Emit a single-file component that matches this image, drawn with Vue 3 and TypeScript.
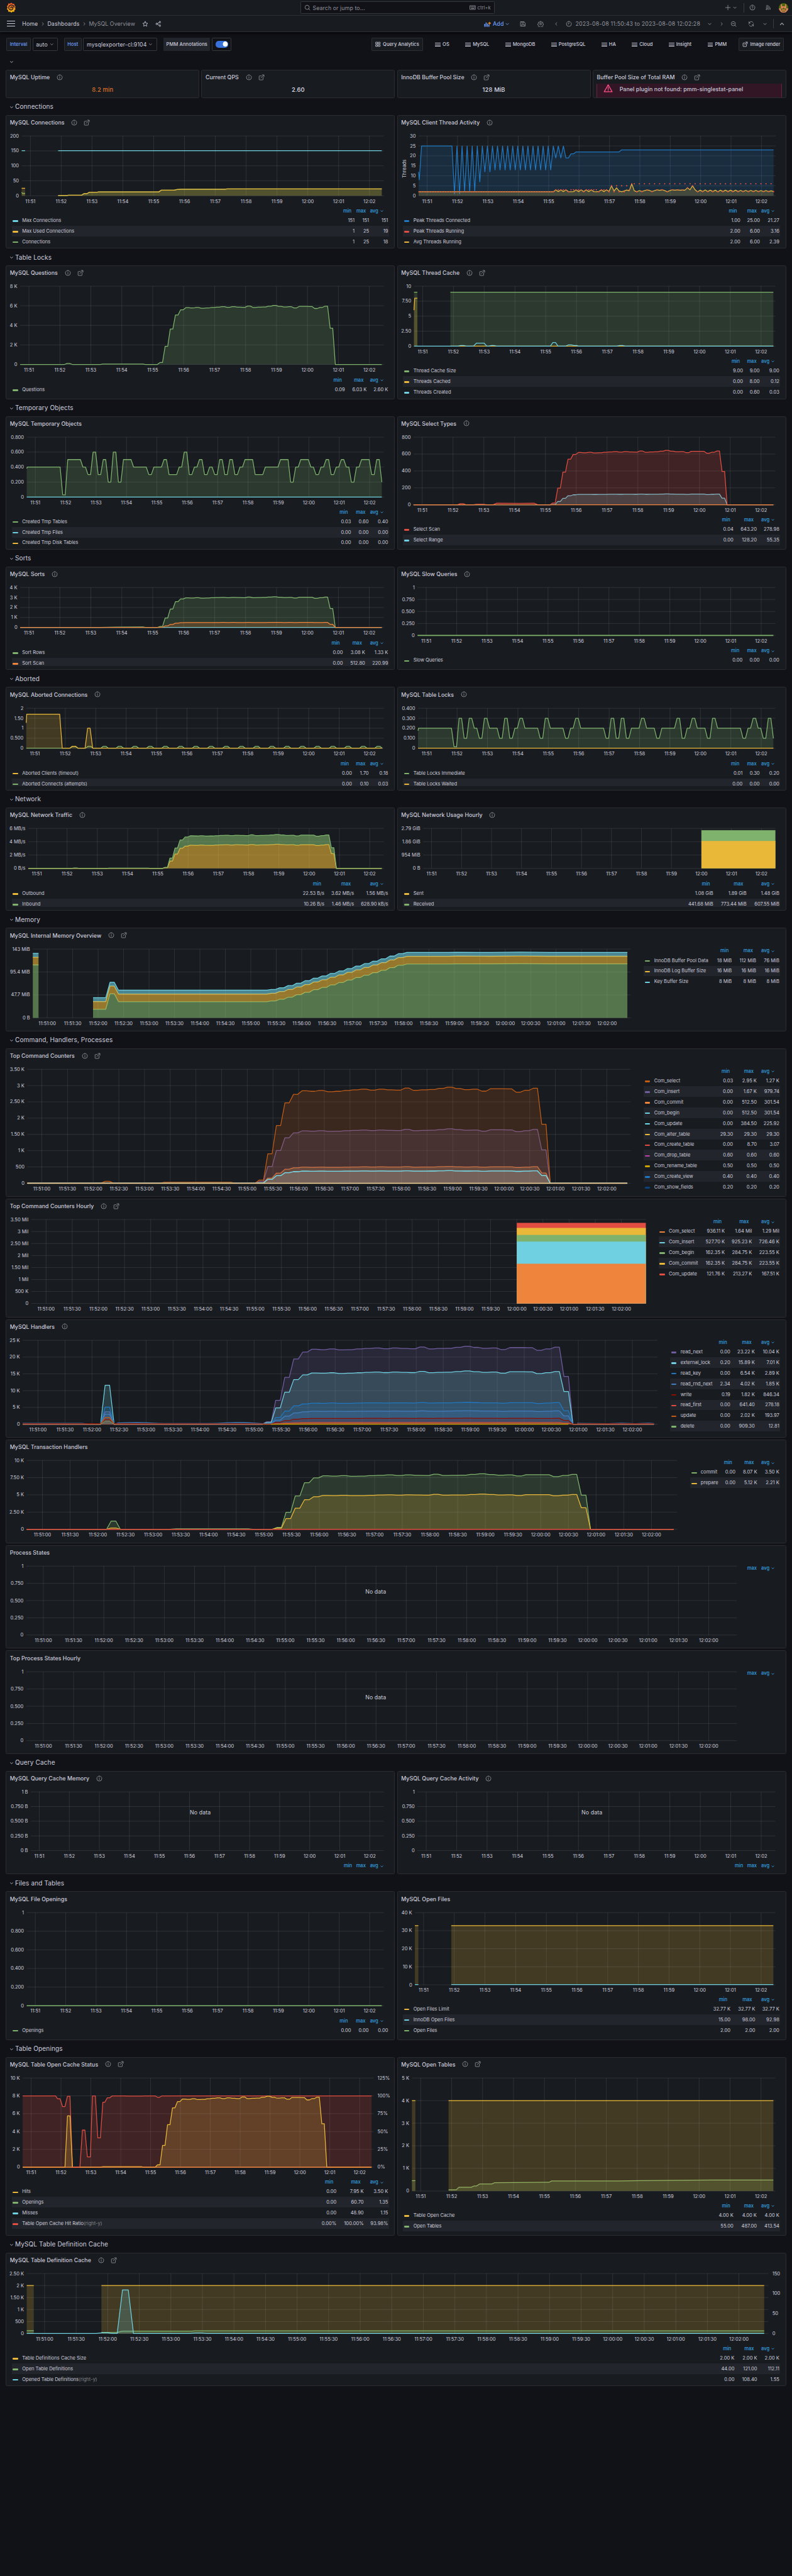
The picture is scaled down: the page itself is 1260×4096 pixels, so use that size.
<script setup lang="ts">
type Pt = [number, number]

interface Series {
  c: string
  segs: Pt[][]
  fill?: number
  w?: number
  base?: Pt[][]
  dots?: boolean
  right?: boolean
}

interface LegendRow {
  c: string
  name: string
  note?: string
  v: string[]
}

interface Panel {
  title: string
  info?: boolean
  link?: boolean
  h: number
  wide?: boolean
  box: [number, number, number, number]
  labels: string[]
  max: number
  series: Series[]
  legend: LegendRow[]
  cols: number[]
  top?: number
  side?: number
  heads?: string[]
  rightLabels?: string[]
  rightMax?: number
  noData?: [number, number]
  yTitle?: string
}

interface Section {
  title: string
  rows: Panel[][]
}

const SPAN = 705
const END = 701

const green = '#7EB26D'
const yellow = '#EAB839'
const cyan = '#6ED0E0'
const orange = '#EF843C'
const red = '#E24D42'
const blue = '#1F78C1'
const purple = '#705DA0'
const rust = '#C15C17'

// Shape of the benchmark run, sampled every ten seconds and shared by most counters.
const load = [
  0.2, 1.85, 3.62, 5.05, 5.58, 5.8, 5.77, 5.82, 5.75, 5.77, 5.82, 5.86, 5.9, 5.84, 5.9, 5.86, 5.84,
  5.97, 5.83, 5.86, 5.88, 5.95, 6.03, 5.94, 5.87, 5.9, 5.78, 5.93, 5.93, 5.92, 5.72, 5.83, 5.96, 3.7, 0,
]

function hold(t0: number, values: number[]): Pt[] {
  return values.flatMap((v, i): Pt[] => [[t0 + i * 10, v], [t0 + i * 10 + 5, v]])
}

function bump(a: number, b: number, v: number, z = 0): Pt[] {
  return [[a - 5, z], [a, v], [b, v], [b + 5, z]]
}

function run(max: number, early: Pt[] = []): Pt[][] {
  return [[[0, 0], ...early, [266, 0], ...hold(271, load.map((v) => (v / 6.03) * max)), [END, 0]]]
}

function flat(v: number, split = true): Pt[][] {
  return split ? [[[0, v], [6.7, v]], [[71, v], [END, v]]] : [[[0, v], [END, v]]]
}

function add(segs: Pt[][], d: number): Pt[][] {
  return segs.map((s) => s.map(([t, v]): Pt => [t, v + d]))
}

function noise(base: number, amp: number, seed: number): Pt[] {
  const out: Pt[] = []
  for (let t = 106; t < 262; t += 10) out.push([t, base + amp * Math.max(0, Math.sin(t * 0.055 + seed))])
  return out
}

const tiny = bump(91, 96, 0.1)
const early: Pt[] = [...tiny, [155, 0], [160, 0.05], [238, 0.05], [243, 0]]
const scaled = (k: number): Pt[] => early.map(([t, v]): Pt => [t, v * k])

const threads: Pt[] = [[0, 12], [1.5, 8], [6, 25], [66, 25]]
const dips = [1, 1, 2, 2, 2, 7, 12, 12, 13, 13, 13, 13, 13, 13, 13, 13, 13, 13, 13, 13, 19, 19]
dips.forEach((v, i) => threads.push([71 + i * 10, v], [76 + i * 10, 25]))
threads.push([291, 19], [296, 19], [301, 21], [306, 21], [311, 22], [396, 22], [401, 23], [END, 23])

const avgVals = [
  2, 2.9, 2.1, 2.9, 2.1, 2.9, 2.1, 2, 2.1, 2.9, 2.1, 2.9, 2.1, 2.9, 2.1, 2.9, 2.1, 2, 2.2, 2.9, 2.1, 2.9, 2.2,
  5, 2.4, 4, 2.4, 2, 2.4, 2.9, 2.5, 6, 2.5, 2, 2.6, 2.1, 2.6, 2.9, 2.7, 2.1, 2.6, 3, 2.7, 3, 2.6, 2, 2.6, 3,
  2.8, 3, 2.8, 2.9, 2.8, 4, 3, 5, 3, 2, 2.8, 2.1, 2.9, 2.1, 2.8, 2.1, 2.8, 2, 2.8, 2.1, 2.8, 2.1, 2.8, 2.1,
  2.8, 2.1, 2.7, 2.1, 2.7, 2.1, 2.7, 2.1, 2.7, 2.1, 2.6, 2.1, 2.6, 2.1, 2.5, 2.1,
]
const avgRun: Pt[] = [[0, 2], ...avgVals.map((v, i): Pt => [266 + i * 5, v])]
const peaks: Pt[] = []
for (let t = 1; t < 267; t += 5) peaks.push([t, 2])
avgVals.forEach((v, i) => {
  const t = 266 + i * 5
  if (t < 375) peaks.push([t, v > 2.5 || i % 3 ? 3 : 2])
  else if (t < 420) peaks.push([t, i % 2 ? 5 : Math.round(v)])
  else peaks.push([t, i % 2 ? v : 6])
})

const tmpTables: Pt[] = [
  [0, 0.38], [1, 0.4], [66, 0.4],
  ...hold(71, [
    0.03, 0.5, 0.5, 0.5, 0.4, 0.3, 0.6, 0.3, 0.5, 0.2, 0.6, 0.2, 0.5, 0.5, 0.4, 0.4, 0.4, 0.3, 0.4, 0.4, 0.5,
    0.3, 0.3, 0.4, 0.6, 0.3, 0.4, 0.5, 0.3, 0.4, 0.3, 0.5, 0.3, 0.5, 0.3, 0.4, 0.5, 0.5, 0.3, 0.3, 0.4, 0.4,
    0.4, 0.5, 0.5, 0.2, 0.4, 0.5, 0.5, 0.4, 0.3, 0.4, 0.5, 0.3, 0.4, 0.5, 0.4, 0.2, 0.4, 0.5, 0.5, 0.3, 0.5,
  ]),
  [END, 0.2],
]

const lockVals: Pt[] = [
  [0, 0.175], [1, 0.2], [66, 0.2],
  ...hold(71, [
    0.015, 0.3, 0.1, 0.3, 0.2, 0.1, 0.3, 0.2, 0.2, 0.1, 0.3, 0.1, 0.2, 0.3, 0.2, 0.2, 0.2, 0.1, 0.3, 0.2, 0.2,
    0.2, 0.1, 0.2, 0.3, 0.2, 0.2, 0.2, 0.2, 0.2, 0.1, 0.3, 0.1, 0.3, 0.1, 0.2, 0.2, 0.3, 0.2, 0.2, 0.1, 0.2,
    0.2, 0.2, 0.3, 0.1, 0.2, 0.3, 0.2, 0.2, 0.1, 0.3, 0.2, 0.2, 0.2, 0.2, 0.2, 0.1, 0.2, 0.3, 0.2, 0.1, 0.3,
  ]),
  [END, 0.1],
]

const abortedBumps: Pt[] = []
for (let t = 91; t < 695; t += 30) abortedBumps.push(...bump(t + (t > 91 ? 1 : 0), t + 6, 0.1))

const used: Pt[][] = [
  [[0, 25], [6.7, 25]],
  [[71, 1], [88, 1], [91, 2], [117, 2], [121, 7], [127, 7], [132, 12], [147, 12], [150, 13], [267, 13], [272, 19],
    [297, 19], [302, 21], [310, 22], [395, 22], [400, 23], [END, 23]],
]
const current: Pt[][] = [[[0, 12], [1.5, 8], [6.7, 8]], used[1]]

const pool: Pt[][] = [
  [[0, 110], [6.7, 110]],
  [
    [71, 17.8], [86, 17.8], [91, 50], [96, 50], [101, 33.5], [276, 33.5],
    ...hold(281, [35, 38.5, 43, 48, 53, 58.5, 63, 68.3, 73.4, 78.5, 83.6, 88.7, 93.8, 98.7, 104.3, 109.3, 111.9]),
    [490, 111.9], [500, 112.3], [540, 112], [575, 112.6], [610, 112], [END, 112],
  ],
]

function spike(v: number): Pt[] {
  return bump(91.5, 96.5, v)
}

const ratio: Pt[] = [
  [0, 100], [66, 100], [70, 96], [75, 96], [80, 85], [85, 85], [90, 99.5], [95, 99.5], [100, 0], [115, 0], [120, 52],
  [125, 52], [130, 14.5], [136, 14.5], [140, 100], [146, 100], [151, 41], [156, 41], [161, 91], [165, 91], [170, 97.3],
  [175, 97.3], [180, 100], [206, 100], [210, 99.6], [240, 99.6], [243, 100], [266, 100], [271, 98], [275, 98],
  [280, 100], [END, 100],
]

const openTables: Pt[][] = [
  [[0, 0.46], [6.7, 0.46]],
  [[71, 0.055], [86, 0.055], [91, 0.165], [115, 0.165], [120, 0.22], [125, 0.22], [131, 0.31], [155, 0.31],
    [160, 0.365], [266, 0.385], [271, 0.445], [400, 0.447], [500, 0.47], [580, 0.487], [END, 0.487]],
]

function bar(v: number): Pt[][] {
  return [[[557, v], [SPAN, v]]]
}

function k(n: number[], unit = ' K'): string[] {
  return n.map((v) => (v === 0 ? '0' : Number.isInteger(v) ? v + unit : v.toFixed(2) + unit))
}

const sections: Section[] = [
  {
    title: 'Connections',
    rows: [[
      {
        title: 'MySQL Connections', info: true, link: true, h: 334, box: [38.8, 953.4, 51.3, 202.3],
        labels: ['200', '150', '100', '50', '0'], max: 200, top: 251, cols: [100.6, 64],
        series: [
          { c: green, segs: current, fill: 0.2 },
          { c: yellow, segs: used, fill: 0.2 },
          { c: cyan, segs: flat(150.5) },
        ],
        legend: [
          { c: cyan, name: 'Max Connections', v: ['151', '151', '151'] },
          { c: yellow, name: 'Max Used Connections', v: ['1', '25', '19'] },
          { c: green, name: 'Connections', v: ['1', '25', '18'] },
        ],
      },
      {
        title: 'MySQL Client Thread Activity', info: true, h: 334, box: [52.1, 953.9, 51.3, 202.3], yTitle: 'Threads',
        labels: ['30', '25', '20', '15', '10', '5', '0'], max: 30, top: 251, cols: [114.7, 65],
        series: [
          { c: blue, segs: [threads], fill: 0.2 },
          { c: yellow, segs: [avgRun], fill: 0.2 },
          { c: red, segs: [peaks], dots: true },
        ],
        legend: [
          { c: blue, name: 'Peak Threads Connected', v: ['1.00', '25.00', '21.27'] },
          { c: red, name: 'Peak Threads Running', v: ['2.00', '6.00', '3.16'] },
          { c: yellow, name: 'Avg Threads Running', v: ['2.00', '6.00', '2.39'] },
        ],
      },
    ]],
  },
  {
    title: 'Table Locks',
    rows: [[
      {
        title: 'MySQL Questions', info: true, link: true, h: 334, box: [35, 953.4, 51.1, 248.7],
        labels: k([8, 6, 4, 2, 0]), max: 8, top: 298, cols: [125, 70],
        series: [{ c: green, segs: run(6.03, early), fill: 0.2 }],
        legend: [{ c: green, name: 'Questions', v: ['0.09', '6.03 K', '2.60 K'] }],
      },
      {
        title: 'MySQL Thread Cache', info: true, link: true, h: 334, box: [40.6, 953.4, 51.1, 202.4],
        labels: ['10', '7.50', '5', '2.50', '0'], max: 10, top: 251, cols: [107.7, 65.6],
        series: [
          { c: green, segs: flat(9), fill: 0.2 },
          { c: yellow, segs: [[[0, 6], [1.5, 8], [6.7, 8]], [[71, 0], [END, 0]]], fill: 0.2 },
          {
            c: cyan,
            segs: [[[0, 0], ...bump(91, 97, 0.1), [116, 0], [122, 0.5], [137, 0.5], [142, 0], ...bump(151, 156, 0.1),
              ...bump(271, 276, 0.6), [296, 0], [301, 0.2], [307, 0.2], [312, 0.1], [318, 0.1], [320, 0],
              ...bump(401, 407, 0.1), [END, 0]]],
          },
        ],
        legend: [
          { c: green, name: 'Thread Cache Size', v: ['9.00', '9.00', '9.00'] },
          { c: yellow, name: 'Threads Cached', v: ['0.00', '8.00', '0.12'] },
          { c: cyan, name: 'Threads Created', v: ['0.00', '0.60', '0.03'] },
        ],
      },
    ]],
  },
  {
    title: 'Temporary Objects',
    rows: [[
      {
        title: 'MySQL Temporary Objects', h: 334, box: [51.6, 953.4, 51.1, 202.4],
        labels: ['0.800', '0.600', '0.400', '0.200', '0'], max: 0.8, top: 251, cols: [109.5, 65],
        series: [
          { c: green, segs: [tmpTables], fill: 0.2 },
          { c: cyan, segs: flat(0, false) },
        ],
        legend: [
          { c: green, name: 'Created Tmp Tables', v: ['0.03', '0.60', '0.40'] },
          { c: cyan, name: 'Created Tmp Files', v: ['0.00', '0.00', '0.00'] },
          { c: yellow, name: 'Created Tmp Disk Tables', v: ['0.00', '0.00', '0.00'] },
        ],
      },
      {
        title: 'MySQL Select Types', info: true, h: 334, box: [39.4, 953.4, 51.1, 222],
        labels: ['800', '600', '400', '200', '0'], max: 800, top: 271, cols: [132, 73],
        series: [
          { c: cyan, segs: run(128.2), fill: 0.2 },
          {
            c: red,
            segs: run(643.2, [...bump(91, 97, 13), [117, 0], [122, 6], [137, 6], [142, 0], [155, 0], [162, 19],
              [205, 17], [235, 19], [242, 0]]),
            fill: 0.2,
          },
          { c: orange, segs: flat(0, false) },
        ],
        legend: [
          { c: red, name: 'Select Scan', v: ['0.04', '643.20', '278.98'] },
          { c: cyan, name: 'Select Range', v: ['0.00', '128.20', '55.35'] },
        ],
      },
    ]],
  },
  {
    title: 'Sorts',
    rows: [[
      {
        title: 'MySQL Sorts', info: true, h: 258, box: [35, 953.4, 51.3, 152.2],
        labels: k([4, 3, 2, 1, 0]), max: 4, top: 202, cols: [130, 74],
        series: [
          { c: green, segs: run(3.08, [[155, 0], [185, 0.04], [238, 0.05], [243, 0]]), fill: 0.2 },
          { c: cyan, segs: flat(0, false) },
          { c: orange, segs: run(0.5128), fill: 0.2 },
        ],
        legend: [
          { c: green, name: 'Sort Rows', v: ['0.00', '3.08 K', '1.33 K'] },
          { c: orange, name: 'Sort Scan', v: ['0.00', '512.80', '220.99'] },
        ],
      },
      {
        title: 'MySQL Slow Queries', info: true, h: 258, box: [49.6, 953.4, 51.3, 172.3],
        labels: ['1', '0.750', '0.500', '0.250', '0'], max: 1, top: 221.6, cols: [109, 65.6],
        series: [{ c: green, segs: flat(0, false), w: 2.4 }],
        legend: [{ c: green, name: 'Slow Queries', v: ['0.00', '0.00', '0.00'] }],
      },
    ]],
  },
  {
    title: 'Aborted',
    rows: [[
      {
        title: 'MySQL Aborted Connections', info: true, h: 258, box: [50.3, 953.4, 51.3, 152.2],
        labels: ['2', '1.50', '1', '0.500', '0'], max: 2, top: 202, cols: [107, 65],
        series: [
          { c: green, segs: [[[0, 0], ...abortedBumps, [END, 0]]], fill: 0.2 },
          {
            c: yellow,
            segs: [[[0, 1.27], [1, 1.7], [66, 1.7], [71, 0], ...bump(91, 97, 0.1), [116, 0], [121, 1], [126, 1],
              [131, 0], [END, 0]]],
            fill: 0.2,
          },
        ],
        legend: [
          { c: yellow, name: 'Aborted Clients (timeout)', v: ['0.00', '1.70', '0.18'] },
          { c: green, name: 'Aborted Connects (attempts)', v: ['0.00', '0.10', '0.03'] },
        ],
      },
      {
        title: 'MySQL Table Locks', info: true, h: 258, box: [50.8, 953.4, 51.3, 152.2],
        labels: ['0.400', '0.300', '0.200', '0.100', '0'], max: 0.4, top: 202, cols: [109, 65.6],
        series: [
          { c: green, segs: [lockVals], fill: 0.2 },
          { c: yellow, segs: flat(0, false) },
        ],
        legend: [
          { c: green, name: 'Table Locks Immediate', v: ['0.01', '0.30', '0.20'] },
          { c: yellow, name: 'Table Locks Waited', v: ['0.00', '0.00', '0.00'] },
        ],
      },
    ]],
  },
  {
    title: 'Network',
    rows: [[
      {
        title: 'MySQL Network Traffic', info: true, h: 258, box: [55.4, 953.4, 51.3, 152.4],
        labels: ['6 MB/s', '4 MB/s', '2 MB/s', '0 B/s'], max: 6, top: 202, cols: [177, 102],
        series: [
          { c: yellow, segs: run(3.62), fill: 0.6 },
          { c: green, segs: run(5.08, scaled(0.8)), fill: 0.6, base: run(3.62, scaled(0)) },
        ],
        legend: [
          { c: yellow, name: 'Outbound', v: ['22.53 B/s', '3.62 MB/s', '1.56 MB/s'] },
          { c: green, name: 'Inbound', v: ['10.26 B/s', '1.46 MB/s', '628.90 kB/s'] },
        ],
      },
      {
        title: 'MySQL Network Usage Hourly', info: true, h: 258, box: [63.6, 953.4, 51.3, 152.4],
        labels: ['2.79 GiB', '1.86 GiB', '954 MiB', '0 B'], max: 2.79, top: 202, cols: [183, 99],
        series: [
          { c: green, segs: bar(2.65), fill: 1, w: 1 },
          { c: yellow, segs: bar(1.9), fill: 1, w: 1 },
        ],
        legend: [
          { c: yellow, name: 'Sent', v: ['1.08 GiB', '1.89 GiB', '1.48 GiB'] },
          { c: green, name: 'Received', v: ['441.68 MiB', '773.44 MiB', '607.55 MiB'] },
        ],
      },
    ]],
  },
  {
    title: 'Memory',
    rows: [[
      {
        title: 'MySQL Internal Memory Overview', info: true, link: true, h: 258, wide: true,
        box: [67, 1577, 51.1, 224.7], labels: ['143 MiB', '95.4 MiB', '47.7 MiB', '0 B'], max: 143, side: 1610,
        cols: [136, 74.6],
        series: [
          { c: green, segs: pool, fill: 0.6 },
          { c: yellow, segs: add(pool, 16), fill: 0.6, base: pool },
          { c: cyan, segs: add(pool, 24), fill: 0.6, base: add(pool, 16) },
        ],
        legend: [
          { c: green, name: 'InnoDB Buffer Pool Data', v: ['18 MiB', '112 MiB', '76 MiB'] },
          { c: yellow, name: 'InnoDB Log Buffer Size', v: ['16 MiB', '16 MiB', '16 MiB'] },
          { c: cyan, name: 'Key Buffer Size', v: ['8 MiB', '8 MiB', '8 MiB'] },
        ],
      },
    ]],
  },
  {
    title: 'Command, Handlers, Processes',
    rows: [
      [{
        title: 'Top Command Counters', info: true, link: true, h: 372, wide: true, box: [52.9, 1577, 51.4, 339],
        labels: ['3.50 K', '3 K', '2.50 K', '2 K', '1.50 K', '1 K', '500', '0'], max: 3.5, side: 1610,
        cols: [133, 73],
        series: [
          { c: '#70DBED', segs: run(0.3845), fill: 0.28 },
          { c: cyan, segs: run(0.5), fill: 0.1, w: 0 },
          { c: orange, segs: run(0.5125), fill: 0.22 },
          { c: purple, segs: run(1.67), fill: 0.2 },
          { c: rust, segs: run(2.95, scaled(0.6)), fill: 0.2 },
          { c: '#70DBED', segs: run(0.3845) },
          { c: '#F4D598', segs: flat(0, false), w: 2.4 },
        ],
        legend: [
          { c: rust, name: 'Com_select', v: ['0.03', '2.95 K', '1.27 K'] },
          { c: purple, name: 'Com_insert', v: ['0.00', '1.67 K', '979.74'] },
          { c: orange, name: 'Com_commit', v: ['0.00', '512.50', '301.54'] },
          { c: cyan, name: 'Com_begin', v: ['0.00', '512.50', '301.54'] },
          { c: '#70DBED', name: 'Com_update', v: ['0.00', '384.50', '225.92'] },
          { c: yellow, name: 'Com_alter_table', v: ['29.30', '29.30', '29.30'] },
          { c: red, name: 'Com_create_table', v: ['0.00', '8.70', '3.07'] },
          { c: '#BA43A9', name: 'Com_drop_table', v: ['0.60', '0.60', '0.60'] },
          { c: '#CCA300', name: 'Com_rename_table', v: ['0.50', '0.50', '0.50'] },
          { c: blue, name: 'Com_create_view', v: ['0.40', '0.40', '0.40'] },
          { c: '#0A437C', name: 'Com_show_fields', v: ['0.20', '0.20', '0.20'] },
        ],
      }],
      [{
        title: 'Top Command Counters Hourly', info: true, link: true, h: 296, wide: true, box: [63, 1615, 51.2, 263.2],
        labels: ['3.50 Mil', '3 Mil', '2.50 Mil', '2 Mil', '1.50 Mil', '1 Mil', '500 K', '0'], max: 3.5, side: 1647,
        cols: [153.6, 85],
        series: [
          { c: red, segs: bar(3.35), fill: 1, w: 1 },
          { c: yellow, segs: bar(3.14), fill: 1, w: 1 },
          { c: green, segs: bar(2.85), fill: 1, w: 1 },
          { c: cyan, segs: bar(2.573), fill: 1, w: 1 },
          { c: orange, segs: bar(1.648), fill: 1, w: 1 },
        ],
        legend: [
          { c: orange, name: 'Com_select', v: ['936.11 K', '1.64 Mil', '1.29 Mil'] },
          { c: cyan, name: 'Com_insert', v: ['527.70 K', '925.23 K', '726.46 K'] },
          { c: green, name: 'Com_begin', v: ['162.35 K', '284.75 K', '223.55 K'] },
          { c: yellow, name: 'Com_commit', v: ['162.35 K', '284.75 K', '223.55 K'] },
          { c: red, name: 'Com_update', v: ['121.76 K', '213.27 K', '167.51 K'] },
        ],
      }],
      [{
        title: 'MySQL Handlers', info: true, h: 296, wide: true, box: [41.4, 1644.7, 51.3, 263.2],
        labels: k([25, 20, 15, 10, 5, 0]), max: 25, side: 1676.6, cols: [140, 78],
        series: [
          { c: purple, segs: run(23.22, spike(3.7)), fill: 0.2 },
          { c: cyan, segs: run(15.89, spike(11.6)), fill: 0.2 },
          { c: blue, segs: run(6.54, spike(5.1)), fill: 0.2 },
          {
            c: '#447EBC',
            segs: [[[0, 0.28], [66, 0.28], [72, 0.1], ...spike(3), ...noise(0.22, 0.3, 1), [266, 0.2],
              ...hold(271, load.map((v) => (v / 6.03) * 4.02)), [616, 0.28], [650, 0.2], [665, 0.35], [680, 0.2],
              [695, 0.35], [END, 0.25]]],
            fill: 0.2,
          },
          {
            c: '#890F02',
            segs: [[[0, 0.15], ...bump(91.5, 96.5, 1.4, 0.15), [266, 0.12],
              ...hold(271, load.map((v) => (v / 6.03) * 1.82)), [616, 0.15], [END, 0.15]]],
            fill: 0.2,
          },
          { c: rust, segs: run(0.4, spike(2)), fill: 0.2 },
          { c: red, segs: run(0.64), fill: 0.2, w: 0.8 },
          { c: green, segs: [[[86, 0], ...spike(0.9), [102, 0]]], fill: 0.2, w: 1 },
          { c: '#CCA300', segs: [[[276, 0], [606, 0]]] },
        ],
        legend: [
          { c: purple, name: 'read_next', v: ['0.00', '23.22 K', '10.04 K'] },
          { c: cyan, name: 'external_lock', v: ['0.20', '15.89 K', '7.01 K'] },
          { c: blue, name: 'read_key', v: ['0.00', '6.54 K', '2.89 K'] },
          { c: '#447EBC', name: 'read_rnd_next', v: ['2.34', '4.02 K', '1.85 K'] },
          { c: '#890F02', name: 'write', v: ['0.19', '1.82 K', '846.34'] },
          { c: red, name: 'read_first', v: ['0.00', '641.40', '278.18'] },
          { c: rust, name: 'update', v: ['0.00', '2.02 K', '193.97'] },
          { c: green, name: 'delete', v: ['0.00', '909.30', '12.81'] },
        ],
      }],
      [{
        title: 'MySQL Transaction Handlers', h: 258, wide: true, box: [51.6, 1694.5, 51.3, 225.2],
        labels: ['10 K', '7.50 K', '5 K', '2.50 K', '0'], max: 10, side: 1727.6, cols: [127, 72],
        series: [
          { c: green, segs: run(8.07, [...spike(1.2), [155, 0], [162, 0.08], [240, 0.08], [245, 0]]), fill: 0.2 },
          { c: yellow, segs: run(5.12, spike(0.2)), fill: 0.2 },
          { c: red, segs: flat(0, false), w: 2.2 },
        ],
        legend: [
          { c: green, name: 'commit', v: ['0.00', '8.07 K', '3.50 K'] },
          { c: yellow, name: 'prepare', v: ['0.00', '5.12 K', '2.21 K'] },
        ],
      }],
      [{
        title: 'Process States', h: 258, wide: true, box: [50.3, 1845, 51.4, 225.3],
        labels: ['1', '0.750', '0.500', '0.250', '0'], max: 1, side: 1860, cols: [65], series: [], legend: [],
        heads: ['max'], noData: [933, 116.5],
      }],
      [{
        title: 'Top Process States Hourly', h: 258, wide: true, box: [50.3, 1845, 51.4, 225.3],
        labels: ['1', '0.750', '0.500', '0.250', '0'], max: 1, side: 1860, cols: [65], series: [], legend: [],
        heads: ['max'], noData: [933, 116.5],
      }],
    ],
  },
  {
    title: 'Query Cache',
    rows: [[
      {
        title: 'MySQL Query Cache Memory', info: true, h: 258, box: [61.8, 953.4, 51.4, 199.5],
        labels: ['1 B', '0.750 B', '0.500 B', '0.250 B', '0 B'], max: 1, top: 248.5, cols: [99, 64.5],
        series: [], legend: [], noData: [490, 103.5],
      },
      {
        title: 'MySQL Query Cache Activity', info: true, h: 258, box: [49.6, 953.4, 51.4, 199.5],
        labels: ['1', '0.750', '0.500', '0.250', '0'], max: 1, top: 248.5, cols: [99.5, 65],
        series: [], legend: [], noData: [490, 103.5],
      },
    ]],
  },
  {
    title: 'Files and Tables',
    rows: [[
      {
        title: 'MySQL File Openings', h: 372, box: [51.6, 953.4, 51.4, 286.2],
        labels: ['1', '0.800', '0.600', '0.400', '0.200', '0'], max: 1, top: 335.5, cols: [109.5, 65],
        series: [{ c: green, segs: flat(0, false), w: 2.4 }],
        legend: [{ c: green, name: 'Openings', v: ['0.00', '0.00', '0.00'] }],
      },
      {
        title: 'MySQL Open Files', h: 372, box: [43, 953.4, 51.4, 233.6],
        labels: k([40, 30, 20, 10, 0]), max: 40, top: 281.6, cols: [139.6, 77],
        series: [
          { c: yellow, segs: flat(32.77), fill: 0.2 },
          { c: cyan, segs: flat(0.1) },
        ],
        legend: [
          { c: yellow, name: 'Open Files Limit', v: ['32.77 K', '32.77 K', '32.77 K'] },
          { c: cyan, name: 'InnoDB Open Files', v: ['15.00', '98.00', '92.98'] },
          { c: green, name: 'Open Files', v: ['2.00', '2.00', '2.00'] },
        ],
      },
    ]],
  },
  {
    title: 'Table Openings',
    rows: [[
      {
        title: 'MySQL Table Open Cache Status', info: true, link: true, h: 448, box: [41.4, 927.5, 51.3, 276.4],
        labels: k([10, 8, 6, 4, 2, 0]), max: 10, top: 325, cols: [146.5, 77.6],
        rightLabels: ['125%', '100%', '75%', '50%', '25%', '0%'], rightMax: 125,
        series: [
          { c: red, segs: [ratio], fill: 0.2, right: true },
          {
            c: yellow,
            segs: run(7.95, [...bump(90, 95, 5.75), [155, 0], [162, 0.06], [238, 0.06], [243, 0]]),
            fill: 0.2,
          },
          { c: orange, segs: flat(0, false), w: 2.4 },
          { c: red, segs: [[[100, 0], [115, 0]]] },
        ],
        legend: [
          { c: yellow, name: 'Hits', v: ['0.00', '7.95 K', '3.50 K'] },
          { c: green, name: 'Openings', v: ['0.00', '60.70', '1.35'] },
          { c: cyan, name: 'Misses', v: ['0.00', '48.90', '1.15'] },
          { c: red, name: 'Table Open Cache Hit Ratio', note: '(right-y)', v: ['0.00%', '100.00%', '93.98%'] },
        ],
      },
      {
        title: 'MySQL Open Tables', info: true, link: true, h: 448, box: [35.5, 953.4, 51.3, 336.5],
        labels: k([5, 4, 3, 2, 1, 0]), max: 5, top: 385.2, cols: [132, 73],
        series: [
          { c: green, segs: openTables, fill: 0.2 },
          { c: yellow, segs: flat(4), fill: 0.2 },
        ],
        legend: [
          { c: yellow, name: 'Table Open Cache', v: ['4.00 K', '4.00 K', '4.00 K'] },
          { c: green, name: 'Open Tables', v: ['55.00', '487.00', '413.54'] },
        ],
      },
    ]],
  },
  {
    title: 'MySQL Table Definition Cache',
    rows: [[
      {
        title: 'MySQL Table Definition Cache', info: true, link: true, h: 334, wide: true,
        box: [51.6, 1924.5, 51.2, 202.5], labels: ['2.50 K', '2 K', '1.50 K', '1 K', '500', '0'], max: 2.5, top: 251,
        cols: [129.4, 72], rightLabels: ['150', '100', '50', '0'], rightMax: 150,
        series: [
          { c: yellow, segs: flat(2), fill: 0.2 },
          {
            c: green,
            segs: [
              [[0, 0.121], [6.7, 0.121]],
              [[71, 0.044], [86, 0.044], [91, 0.1], [157, 0.1], [160, 0.112], [END, 0.112]],
            ],
            fill: 0.2,
          },
          {
            c: cyan,
            segs: [[[0, 0], [66, 0], [71, 1.5], [77, 1.5], [81, 0], ...bump(91, 96.5, 109), [155, 0], [160, 1.2],
              [166, 1.2], [171, 0], [END, 0]]],
            fill: 0.2, right: true,
          },
        ],
        legend: [
          { c: yellow, name: 'Table Definitions Cache Size', v: ['2.00 K', '2.00 K', '2.00 K'] },
          { c: green, name: 'Open Table Definitions', v: ['44.00', '121.00', '112.11'] },
          { c: cyan, name: 'Opened Table Definitions', note: '(right-y)', v: ['0.00', '108.40', '1.55'] },
        ],
      },
    ]],
  },
]

function panelWidth(p: Panel): number {
  return p.wide ? 1968 : 980
}

function chartWidth(p: Panel): number {
  return p.side ?? panelWidth(p)
}

function chartHeight(p: Panel): number {
  return (p.side ? p.h : (p.top ?? p.h) - 21) - 32
}

function tx(p: Panel, t: number): number {
  return p.box[0] + (t / SPAN) * (p.box[1] - p.box[0])
}

function vy(p: Panel, v: number, right = false): number {
  const max = right ? p.rightMax ?? 1 : p.max
  return p.box[3] - (v / max) * (p.box[3] - p.box[2])
}

function pts(p: Panel, s: Series, seg: Pt[]): string[] {
  return seg.map(([t, v]) => `${tx(p, t).toFixed(1)},${vy(p, v, s.right).toFixed(1)}`)
}

function linePath(p: Panel, s: Series): string {
  return s.segs.map((seg) => 'M' + pts(p, s, seg).join('L')).join('')
}

function areaPath(p: Panel, s: Series): string {
  return s.segs
    .map((seg, i) => {
      const lower = s.base ? [...s.base[i]].reverse() : ([[seg[seg.length - 1][0], 0], [seg[0][0], 0]] as Pt[])
      return 'M' + [...pts(p, s, seg), ...pts(p, s, lower)].join('L') + 'Z'
    })
    .join('')
}

function labelY(p: Panel, list: string[], i: number): number {
  return p.box[2] + (i / (list.length - 1)) * (p.box[3] - p.box[2])
}

function ticks(p: Panel): { t: number; text: string }[] {
  const out: { t: number; text: string }[] = []
  for (let s = 0; s <= 660; s += p.wide ? 30 : 60) {
    const total = 11 * 3600 + 51 * 60 + s
    const two = (n: number) => String(n).padStart(2, '0')
    const hm = `${two(Math.floor(total / 3600))}:${two(Math.floor(total / 60) % 60)}`
    out.push({ t: 17 + s, text: p.wide ? `${hm}:${two(total % 60)}` : hm })
  }
  return out
}

function heads(p: Panel): string[] {
  return p.heads ?? ['min', 'max']
}

function colWidths(p: Panel): string {
  const edges = [...p.cols, 16]
  const widths = edges.slice(1).map((e, i) => `${edges[i] - e}px`)
  return ['1fr', ...widths].join(' ')
}

function legendStyle(p: Panel): Record<string, string> {
  return p.side
    ? { width: `${1954 - p.side}px`, height: `${p.h - 32 - 14 - 8}px`, marginTop: '14px' }
    : { margin: '0 14px', height: `${p.h - 9 - ((p.top ?? 0) - 21)}px` }
}

const icons: Record<string, string> = {
  info: 'M12 2.5a9.5 9.5 0 1 0 0 19a9.5 9.5 0 1 0 0-19M12 11v5.5M12 7.3v.6',
  link: 'M18 11.5V20a1.5 1.5 0 0 1-1.500 1.500H4.500A1.500 1.500 0 0 1 3 20V8a1.500 1.500 0 0 1 1.500-1.500H12M9.500 14.500L21 3M14.500 2.500H21.500V9.500',
  down: 'M7 10l5 5l5-5',
  up: 'M6 15l6-6l6 6',
  left: 'M14 7l-5 5l5 5',
  right: 'M10 7l5 5l-5 5',
  search: 'M11 3a8 8 0 1 0 0 16a8 8 0 1 0 0-16M17 17l4.500 4.500',
  plus: 'M12 3v18M3 12h18',
  help: 'M12 2.5a9.5 9.5 0 1 0 0 19a9.5 9.5 0 1 0 0-19M9.500 9.500a2.500 2.500 0 1 1 3.800 2.100c-.9.500-1.300 1-1.300 2M12 16.500v.7',
  rss: 'M6 16a2 2 0 1 0 0 4a2 2 0 1 0 0-4M4.500 11.500a8 8 0 0 1 8 8M5.500 7.500a11.500 11.500 0 0 1 11 11.500M6.500 3.500a15 15 0 0 1 14 15',
  star: 'M12 2.800l2.800 6l6.500.8l-4.800 4.500l1.300 6.500L12 17.400l-5.800 3.200l1.300-6.500L2.700 9.600l6.500-.8z',
  share: 'M17.500 2.500a3 3 0 1 0 0 6a3 3 0 1 0 0-6M5.500 9a3 3 0 1 0 0 6a3 3 0 1 0 0-6M17.500 15.500a3 3 0 1 0 0 6a3 3 0 1 0 0-6M8.200 10.700l6.600-3.700M8.200 13.300l6.600 3.700',
  save: 'M3.500 3.500h12l5 5v12h-17zM7.500 3.500v5h7v-5M7.500 20.500v-7h9v7',
  gear: 'M12 8.500a3.500 3.500 0 1 0 0 7a3.500 3.500 0 1 0 0-7M10.300 2.500h3.400l.7 2.700l1.900.8l2.400-1.400l2.400 2.400l-1.400 2.400l.8 1.900l2.700.7v3.400l-2.700.7l-.8 1.900l1.400 2.400l-2.400 2.400l-2.400-1.400l-1.900.8l-.7 2.700h-3.400l-.7-2.700l-1.900-.8l-2.400 1.400l-2.400-2.400l1.400-2.400l-.8-1.900l-2.700-.7v-3.400l2.700-.7l.8-1.900l-1.400-2.400l2.400-2.400l2.400 1.400l1.900-.8z',
  clock: 'M12 2.500a9.500 9.500 0 1 0 0 19a9.500 9.500 0 1 0 0-19M12 6.500V12H8.500',
  zoomOut: 'M11 3a8 8 0 1 0 0 16a8 8 0 1 0 0-16M17 17l4.500 4.500M7.500 11h7',
  sync: 'M3.500 4v5h5M20.500 20v-5h-5M4 9a8.500 8.500 0 0 1 15-2.500M20 15a8.500 8.500 0 0 1-15 2.500M20.500 11v1M3.500 12v1',
  apps: 'M3 3h7v7H3zM14 3h7v7h-7zM3 14h7v7H3zM14 14h7v7h-7z',
  keyboard: 'M2 5h20v14H2zM5.500 9h1M9.500 9h1M13.500 9h1M17.500 9h1M5.500 12h1M9.500 12h1M13.500 12h1M17.500 12h1M7 15.500h10',
  warn: 'M12 3L22 20.500H2zM12 9v5.500M12 17v.6',
}

const stats = [
  { title: 'MySQL Uptime', link: false, value: '8.2 min', color: '#d8702a' },
  { title: 'Current QPS', link: true, value: '2.60', color: '#d8d9e3' },
  { title: 'InnoDB Buffer Pool Size', link: true, value: '128 MiB', color: '#d8d9e3' },
  { title: 'Buffer Pool Size of Total RAM', link: true, value: '', color: '' },
]

const menus = ['OS', 'MySQL', 'MongoDB', 'PostgreSQL', 'HA', 'Cloud', 'Insight', 'PMM']

const avatar = [
  '100000001',
  '001000100',
  '001000100',
  '001111100',
  '001101100',
  '110000011',
  '110111011',
  '011000110',
  '001111100',
]
const avatarCells = avatar.flatMap((row, y) => [...row].map((on, x) => ({ on: on === '1', x, y }))).filter((c) => c.on)
</script>

<template>
  <div class="app">
    <header class="nav">
      <div class="bar">
        <svg class="logo" viewBox="0 0 24 26">
          <defs>
            <linearGradient id="flame" x1="0" y1="0" x2="0" y2="1">
              <stop offset="0" stop-color="#f1502b" />
              <stop offset="1" stop-color="#fcc50e" />
            </linearGradient>
          </defs>
          <path
            fill="url(#flame)"
            d="M13 .5l2.600 2.700l4.400-.2l.6 4.300l2.700 2.600l-1 3.600l1 3.700l-2.700 2.400l-.6 4l-4.200-.5l-3 2.500l-2.800-2.600l-4.600.6l-.7-4.200l-3.300-2.700l1.900-3.600l-1.800-4l3-2.700l.4-3.900l4.300.4z"
          />
          <path
            fill="none" stroke="#181b1f" stroke-width="2.300" stroke-linecap="round"
            d="M19.800 11.500c-1-4-5-6-8.800-5c-4.200 1.200-5.800 5.500-4.300 9c1.600 3.500 6.300 4.300 8.800 1.800c2-2 1.500-5.600-1.200-6.300c-2-.4-3.500 1.500-2.500 3.100"
          />
        </svg>
        <div class="search">
          <svg class="ic" viewBox="0 0 24 24"><path :d="icons.search" /></svg>
          <span>Search or jump to...</span>
          <svg class="ic kbd" viewBox="0 0 24 24"><path :d="icons.keyboard" /></svg>
          <small>ctrl+k</small>
        </div>
        <div class="tools top">
          <svg class="ic" viewBox="0 0 24 24"><path :d="icons.plus" /></svg>
          <svg class="ic s16" viewBox="0 0 24 24"><path :d="icons.down" /></svg>
          <i class="sep" />
          <svg class="ic" viewBox="0 0 24 24"><path :d="icons.help" /></svg>
          <svg class="ic" viewBox="0 0 24 24"><path :d="icons.rss" /></svg>
          <svg class="avatar" viewBox="0 0 9 9">
            <clipPath id="round"><circle cx="4.5" cy="4.5" r="4.5" /></clipPath>
            <g clip-path="url(#round)">
              <rect width="9" height="9" fill="#4b6a08" />
              <rect v-for="(c, i) in avatarCells" :key="i" :x="c.x" :y="c.y" width="1.04" height="1.04" fill="#f8806d" />
            </g>
          </svg>
        </div>
      </div>
      <div class="bar second">
        <div class="burger"><i /><i /><i /></div>
        <nav class="crumbs">
          <span>Home</span>
          <svg class="ic s16" viewBox="0 0 24 24"><path :d="icons.right" /></svg>
          <span>Dashboards</span>
          <svg class="ic s16" viewBox="0 0 24 24"><path :d="icons.right" /></svg>
          <span class="dim">MySQL Overview</span>
        </nav>
        <svg class="ic bright star" viewBox="0 0 24 24"><path :d="icons.star" /></svg>
        <svg class="ic bright" viewBox="0 0 24 24"><path :d="icons.share" /></svg>
        <div class="tools">
          <svg class="addic" viewBox="0 0 20 18">
            <path stroke="#6e9fff" stroke-width="2.600" d="M2 17V9M6 17V5M10 17V8M14 17V11" />
            <path stroke="#ff9830" stroke-width="2" d="M15.500 3v8M11.500 7h8" />
          </svg>
          <b>Add</b>
          <svg class="ic s16 accent" viewBox="0 0 24 24"><path :d="icons.down" /></svg>
          <svg class="ic m1" viewBox="0 0 24 24"><path :d="icons.save" /></svg>
          <svg class="ic m2" viewBox="0 0 24 24"><path :d="icons.gear" /></svg>
          <svg class="ic m3" viewBox="0 0 24 24"><path :d="icons.left" /></svg>
          <svg class="ic m4" viewBox="0 0 24 24"><path :d="icons.clock" /></svg>
          <span class="range">2023-08-08 11:50:43 to 2023-08-08 12:02:28</span>
          <svg class="ic s16 m5" viewBox="0 0 24 24"><path :d="icons.down" /></svg>
          <svg class="ic m6" viewBox="0 0 24 24"><path :d="icons.right" /></svg>
          <svg class="ic m7" viewBox="0 0 24 24"><path :d="icons.zoomOut" /></svg>
          <svg class="ic m8" viewBox="0 0 24 24"><path :d="icons.sync" /></svg>
          <svg class="ic s16 m5" viewBox="0 0 24 24"><path :d="icons.down" /></svg>
          <i class="sep" />
          <svg class="ic s16 m9" viewBox="0 0 24 24"><path :d="icons.up" /></svg>
        </div>
      </div>
    </header>

    <div class="controls">
      <label class="tag w62">Interval</label>
      <div class="pick w64">auto<svg class="ic s14" viewBox="0 0 24 24"><path :d="icons.down" /></svg></div>
      <label class="tag w44">Host</label>
      <div class="pick w187">mysqlexporter-cl:9104<svg class="ic s14" viewBox="0 0 24 24"><path :d="icons.down" /></svg></div>
      <label class="note">PMM Annotations</label>
      <div class="pick w50"><i class="switch" /></div>
      <div class="links">
        <a class="boxed"><svg class="ic s14" viewBox="0 0 24 24"><path :d="icons.apps" /></svg>Query Analytics</a>
        <a v-for="m in menus" :key="m"><span class="bars"><i /><i /><i /></span>{{ m }}</a>
        <a class="boxed"><svg class="ic s14" viewBox="0 0 24 24"><path :d="icons.link" /></svg>Image render</a>
      </div>
    </div>

    <main>
      <h2><svg class="ic s14" viewBox="0 0 24 24"><path :d="icons.down" /></svg></h2>
      <div class="row">
        <section v-for="s in stats" :key="s.title" class="panel stat">
          <header>
            <h3>{{ s.title }}</h3>
            <svg class="ic" viewBox="0 0 24 24"><path :d="icons.info" /></svg>
            <svg v-if="s.link" class="ic" viewBox="0 0 24 24"><path :d="icons.link" /></svg>
          </header>
          <div v-if="s.value" class="value" :style="{ color: s.color }">{{ s.value }}</div>
          <div v-else class="alert">
            <svg class="ic" viewBox="0 0 24 24"><path :d="icons.warn" /></svg>
            <span>Panel plugin not found: pmm-singlestat-panel</span>
          </div>
        </section>
      </div>

      <template v-for="sec in sections" :key="sec.title">
        <h2><svg class="ic s14" viewBox="0 0 24 24"><path :d="icons.down" /></svg>{{ sec.title }}</h2>
        <div v-for="(row, ri) in sec.rows" :key="ri" class="row">
          <section v-for="p in row" :key="p.title" class="panel" :style="{ height: p.h + 'px' }">
            <header>
              <h3>{{ p.title }}</h3>
              <svg v-if="p.info" class="ic" viewBox="0 0 24 24"><path :d="icons.info" /></svg>
              <svg v-if="p.link" class="ic" viewBox="0 0 24 24"><path :d="icons.link" /></svg>
            </header>
            <div class="body" :class="{ beside: p.side }">
              <svg
                class="chart" :width="chartWidth(p)" :height="chartHeight(p)"
                :viewBox="`0 32 ${chartWidth(p)} ${chartHeight(p)}`"
              >
                <g class="grid">
                  <line
                    v-for="(l, i) in p.labels" :key="'h' + i" :x1="p.box[0]" :x2="p.box[1]"
                    :y1="labelY(p, p.labels, i)" :y2="labelY(p, p.labels, i)"
                  />
                  <line
                    v-for="k in ticks(p)" :key="'v' + k.t" :x1="tx(p, k.t)" :x2="tx(p, k.t)"
                    :y1="p.box[2]" :y2="p.box[3]"
                  />
                </g>
                <template v-for="(s, si) in p.series" :key="si">
                  <path v-if="s.fill" :d="areaPath(p, s)" :fill="s.c" :fill-opacity="s.fill" />
                  <g v-if="s.dots">
                    <circle
                      v-for="(d, di) in s.segs[0]" :key="di" :cx="tx(p, d[0])" :cy="vy(p, d[1])" r="1.7" :fill="s.c"
                    />
                  </g>
                  <path
                    v-else-if="s.w !== 0" :d="linePath(p, s)" fill="none" :stroke="s.c" :stroke-width="s.w ?? 2"
                    stroke-linejoin="round"
                  />
                </template>
                <text
                  v-for="(l, i) in p.labels" :key="'l' + i" class="axis end" :x="p.box[0] - 7"
                  :y="labelY(p, p.labels, i) + 4"
                >{{ l }}</text>
                <text
                  v-for="(l, i) in p.rightLabels ?? []" :key="'r' + i" class="axis" :x="p.box[1] + 10"
                  :y="labelY(p, p.rightLabels ?? [], i) + 4"
                >{{ l }}</text>
                <text
                  v-for="k in ticks(p)" :key="'x' + k.t" class="axis mid" :x="tx(p, k.t)" :y="p.box[3] + 18"
                >{{ k.text }}</text>
                <text
                  v-if="p.yTitle" class="axis mid" :transform="`translate(21 ${(p.box[2] + p.box[3]) / 2 + 7}) rotate(-90)`"
                >{{ p.yTitle }}</text>
                <text v-if="p.noData" class="nodata mid" :x="p.noData[0]" :y="p.noData[1] + 5">No data</text>
              </svg>
              <div class="legend" :style="legendStyle(p)">
                <div class="lrow lhead" :style="{ gridTemplateColumns: colWidths(p) }">
                  <span v-for="h in heads(p)" :key="h">{{ h }}</span>
                  <span class="avg">avg<svg viewBox="0 0 8 6"><path d="M1 1l3 3l3-3" /></svg></span>
                </div>
                <div v-for="r in p.legend" :key="r.name" class="lrow" :style="{ gridTemplateColumns: colWidths(p) }">
                  <div class="first">
                    <i :style="{ background: r.c }" />
                    <span class="name">{{ r.name }}<em v-if="r.note"> {{ r.note }}</em></span>
                    <span>{{ r.v[0] }}</span>
                  </div>
                  <span>{{ r.v[1] }}</span>
                  <span>{{ r.v[2] }}</span>
                </div>
              </div>
            </div>
          </section>
        </div>
      </template>
    </main>
  </div>
</template>

<style>
html,
body {
  background: #111217;
}
</style>

<style scoped>
.app {
  zoom: 0.63;
  width: 2000px;
  height: 6500px;
  overflow: hidden;
  background: #111217;
  color: #ccccdc;
  font-family: Inter, 'Liberation Sans', sans-serif;
  font-size: 14px;
  letter-spacing: 0.01em;
}
.app * {
  box-sizing: border-box;
}
.ic {
  width: 16px;
  height: 16px;
  flex: none;
  fill: none;
  stroke: #94959f;
  stroke-width: 2;
  stroke-linecap: round;
  stroke-linejoin: round;
}
.s14 {
  width: 14px;
  height: 14px;
  stroke-width: 2.4;
}
.nav {
  background: #181b1f;
  box-shadow: 0 1px 8px #000;
  position: relative;
}
.bar {
  height: 40px;
  border-bottom: 1px solid #2d2f35;
  display: flex;
  align-items: center;
  padding: 0 16px;
}
.bar.second {
  height: 41px;
}
.logo {
  width: 24px;
  height: 26px;
}
.search {
  width: 490px;
  height: 32px;
  margin-left: 719px;
  background: #111217;
  border: 1px solid #35373d;
  border-radius: 2px;
  display: flex;
  align-items: center;
  padding: 0 8px;
  color: #8e8f99;
}
.search span {
  margin-left: 5px;
  flex: 1;
}
.search small {
  font-size: 12px;
  margin-left: 4px;
}
.tools {
  margin-left: auto;
  display: flex;
  align-items: center;
  color: #94959f;
  letter-spacing: 0.018em;
}
.tools .sep {
  width: 1px;
  height: 24px;
  background: #3a3c42;
  margin-left: 14px;
}
.tools.top .s16 {
  margin-left: 1px;
}
.tools.top .sep + .ic {
  margin: 0 24px 0 14px;
}
.avatar {
  width: 24px;
  height: 24px;
  margin: 0 -6px 0 18px;
}
.burger {
  width: 20px;
  margin: 0 18px 0 2px;
  display: grid;
  gap: 4px;
}
.burger i {
  height: 2px;
  background: #ccccdc;
}
.crumbs {
  display: flex;
  align-items: center;
  gap: 4px;
}
.crumbs .dim {
  color: #8e8f99;
}
.bright {
  stroke: #ccccdc;
}
.star {
  margin: 0 18px 0 17px;
}
.addic {
  width: 18px;
  height: 16px;
  fill: none;
}
.tools b {
  color: #6e9fff;
  font-weight: 500;
  margin: 0 1px 0 5px;
}
.accent {
  stroke: #6e9fff;
}
.m1 {
  margin-left: 24px;
}
.m2 {
  margin-left: 28px;
}
.m3 {
  margin-left: 24px;
}
.m4 {
  margin: 0 9px 0 15px;
}
.m5 {
  margin-left: 10px;
}
.range {
  width: 321px;
  white-space: nowrap;
}
.m6 {
  margin-left: 14px;
}
.m7 {
  margin-left: 15px;
}
.m8 {
  margin: 0 8px 0 28px;
}
.m9 {
  stroke-width: 3;
  margin: 0 1px 0 13px;
}
.controls {
  height: 59px;
  padding: 15px 20px 0 16px;
  display: flex;
}
.controls > * {
  height: 32px;
  display: flex;
  align-items: center;
  justify-content: center;
}
.tag {
  border: 1px solid #2d2f35;
  border-radius: 2px;
  background: #181b1f;
  color: #6e9fff;
  font-size: 12px;
  font-weight: 500;
  margin-right: 4px;
}
.pick {
  border: 1px solid #36383f;
  border-radius: 2px;
  background: #111217;
  margin-right: 16px;
}
.pick .ic {
  margin-left: 3px;
}
.note {
  width: 118px;
  background: #22252b;
  border-radius: 2px;
  font-size: 12px;
  font-weight: 500;
  margin-right: 4px;
}
.w62 {
  width: 62px;
}
.w64 {
  width: 64px;
}
.w44 {
  width: 44px;
}
.w187 {
  width: 187px;
}
.w50 {
  width: 50px;
}
.switch {
  width: 32px;
  height: 16px;
  border-radius: 8px;
  background: radial-gradient(circle at 24.5px 8px, #fff 6px, transparent 6.600px) #3871dc;
}
.links {
  margin-left: auto;
  gap: 21.200px;
}
.links a {
  height: 32px;
  display: flex;
  align-items: center;
  gap: 5px;
  padding: 0 8px;
  border: 1px solid transparent;
  font-size: 12px;
  font-weight: 500;
  letter-spacing: 0;
  white-space: nowrap;
}
.links .boxed {
  border-color: #2d2f35;
  background: #181b1f;
  border-radius: 2px;
}
.links .ic {
  stroke: #ccccdc;
}
.bars {
  display: grid;
  gap: 2.600px;
  width: 14px;
  margin-top: 2px;
}
.bars i {
  height: 1.700px;
  background: #ccccdc;
}
main {
  padding: 0 16px;
}
h2 {
  height: 30px;
  margin: 0 0 8px;
  padding-left: 7px;
  display: flex;
  align-items: center;
  font-size: 16px;
  font-weight: 400;
  letter-spacing: 0.01em;
}
h2 .ic {
  stroke: #ccccdc;
  margin: 3px 1px 0 0;
}
.row {
  display: flex;
  gap: 8px;
  margin-bottom: 8px;
}
.panel {
  flex: 1 1 0;
  background: #181b1f;
  outline: 1px solid #2a2c31;
  outline-offset: -1px;
  border-radius: 2px;
  overflow: hidden;
}
.panel header {
  height: 32px;
  padding: 2px 9px 0;
  display: flex;
  align-items: center;
  gap: 16px;
}
h3 {
  margin: 0;
  padding-right: 1px;
  font-size: 14px;
  font-weight: 500;
  letter-spacing: 0.004em;
  white-space: nowrap;
}
.stat {
  height: 68px;
}
.value {
  height: 35px;
  line-height: 36px;
  text-align: center;
  font-size: 15px;
  font-weight: 500;
}
.alert {
  height: 52px;
  margin: 1px 9px 0;
  padding: 3px 16px 0;
  background: #331626;
  border: 1px solid #6b2240;
  border-top-color: #331626;
  font-weight: 500;
  display: flex;
  align-items: flex-start;
}
.alert .ic {
  width: 24px;
  height: 24px;
  margin: -4px 16px 0 0;
  stroke: #ff5286;
}
.body.beside {
  display: flex;
}
.chart {
  display: block;
  flex: none;
}
.grid line {
  stroke: #f0faff;
  stroke-opacity: 0.17;
  stroke-width: 1;
}
.axis {
  fill: #ccccdc;
  font-size: 12px;
  letter-spacing: 0;
}
.end {
  text-anchor: end;
}
.mid {
  text-anchor: middle;
}
.nodata {
  fill: #ccccdc;
  font-size: 14px;
}
.legend {
  overflow: hidden;
  flex: none;
  font-size: 12px;
  letter-spacing: 0;
}
.lrow {
  display: grid;
  align-items: center;
  height: 26.850px;
  padding-right: 2px;
  text-align: right;
  white-space: nowrap;
}
.lrow:nth-child(odd) {
  background: #22252b;
}
.lrow.lhead {
  height: 21px;
  background: none;
  color: #33a2e5;
  font-weight: 500;
}
.lhead span {
  padding-right: 8px;
}
.lhead .avg {
  padding-right: 12px;
}
.avg svg {
  width: 8px;
  height: 6px;
  margin-left: 5px;
  fill: none;
  stroke: #33a2e5;
  stroke-width: 1.500;
}
.first {
  display: flex;
  align-items: center;
}
.first i {
  width: 14px;
  height: 4px;
  border-radius: 2px;
  margin: 3px 10px 0 2px;
}
.name {
  flex: 1;
  text-align: left;
}
.name em {
  font-style: normal;
  color: #85868f;
}
</style>
